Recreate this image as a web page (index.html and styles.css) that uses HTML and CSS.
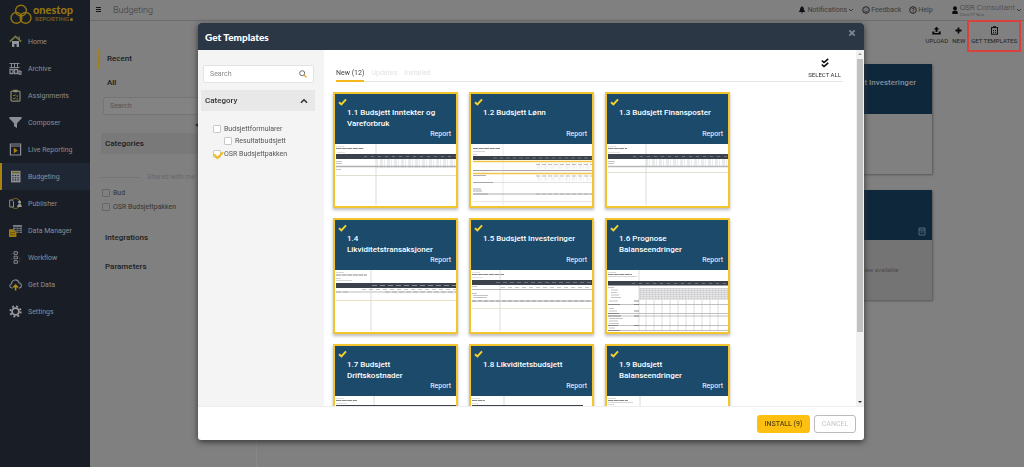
FILE: index.html
```
<!DOCTYPE html>
<html lang="en">
<head>
<meta charset="utf-8">
<title>Budgeting - Get Templates</title>
<link rel="stylesheet" href="styles.css">
</head>
<body>
<svg class="defs" aria-hidden="true">
  <defs>
    <pattern id="cells" width="7" height="2" patternUnits="userSpaceOnUse"><path d="M0 0V2M3 1h3" stroke="#b9bcc0" stroke-width=".6"/></pattern>
    <pattern id="mesh" width="3" height="2" patternUnits="userSpaceOnUse"><rect width="3" height="2" fill="#e9e9ea"/><path d="M0 .5H3M.5 0V2" stroke="#c9cacc" stroke-width=".6"/></pattern>
    <symbol id="tick" viewBox="0 0 9 8"><path d="M1 4.2 3.4 6.4 8 1.4" fill="none" stroke="#f6d32c" stroke-width="2"/></symbol>
    <symbol id="chev" viewBox="0 0 6 4"><path d="M1 1 3 3 5 1" fill="none" stroke="currentColor"/></symbol>
  </defs>
</svg>
<div class="app">
  <aside class="sidebar">
    <a class="logo" href="#" aria-label="onestop reporting">
      <svg class="logo-mark" viewBox="0 0 22 21" fill="none" stroke="#94740e" stroke-width="1.4"><circle cx="11" cy="6.6" r="5.4"/><circle cx="6.4" cy="13.9" r="5.4"/><circle cx="15.6" cy="13.9" r="5.4"/></svg>
      <span class="logo-text"><b>onestop</b><small>REPORTING<i></i></small></span>
    </a>
    <nav class="menu">
      <a href="#"><svg viewBox="0 0 13 13"><path d="M3 6h7v6H7.6V9H5.4v3H3z" fill="#92959a"/><path d="M.8 6.6 6.5 1.4l5.7 5.2" fill="none" stroke="#77793c" stroke-width="1.8"/><path d="M9.5 1.5h1.3v3H9.5z" fill="#777"/></svg>Home</a>
      <a href="#"><svg viewBox="0 0 13 13" fill="none" stroke="#85888d"><path d="M.5 1.5h10M.5 5.5h10M2.5 1v4M5.5 1v4M8.5 1v4"/><path d="M1 7.5h3v4H1zM5.5 7.5h3v4h-3zM10 9l2 .5v2.5H10z" stroke-width="1.3"/></svg>Archive</a>
      <a href="#"><svg viewBox="0 0 13 13" fill="none"><rect x="2" y="2.2" width="9" height="10" rx="1" stroke="#85886f" stroke-width="1.2"/><path d="M4.5.7h4v2.6h-4z" fill="#8b8d6a"/><path d="m4.3 6.2.9.9 1.4-1.6M4.3 9.2l.9.9 1.4-1.6M7.5 7H9M7.5 10H9" stroke="#9b912a"/></svg>Assignments</a>
      <a href="#"><svg viewBox="0 0 13 13"><path d="M.4 1h12.2v1.5L8 7.3V12L5 10.2V7.3L.4 2.5z" fill="#8b8e93"/></svg>Composer</a>
      <a href="#"><svg viewBox="0 0 13 13"><path d="M1.4 1h10.2v11H1.4zM1.4 3h10.2" fill="none" stroke="#8b8e93" stroke-width="1.2"/><path d="m4.8 4.8 4 2.7-4 2.7z" fill="#a9830d"/></svg>Live Reporting</a>
      <a href="#" class="active"><svg viewBox="0 0 13 13"><rect x="2" y=".8" width="9.5" height="11.6" fill="#8a8d91"/><path d="M3 2.6h7.5" stroke="#72672a" stroke-width="1.6"/><path d="M3.2 5.5h7M3.2 7.7h7M3.2 9.9h7" stroke="#242d3a" stroke-width="1.1" stroke-dasharray="1.4 1.2"/></svg>Budgeting</a>
      <a href="#"><svg viewBox="0 0 13 13" fill="none"><circle cx="6.5" cy="6.5" r="5" stroke="#7d6a25"/><path d="M.7 3h2.4l1.4 1.4V10H.7z" fill="#181d26" stroke="#8b8e93"/><circle cx="10.5" cy="5" r="1.5" fill="#9a9da2"/><path d="M8.2 10c0-4 4.6-4 4.6 0z" fill="#9a9da2"/></svg>Publisher</a>
      <a href="#"><svg viewBox="0 0 13 13"><path d="M4 1h9v8H4z" fill="#777a80"/><path d="M4 3.4h9M4 5.6h9M4 7.6h9M7 3v6M10 3v6" stroke="#181d26" stroke-width=".7"/><path d="M0 5.2h5v2h2.4V13H0z" fill="#a17c09"/><path d="M1 8.5h5M1 10.7h5" stroke="#54430f" stroke-width=".6"/></svg>Data Manager</a>
      <a href="#"><svg viewBox="0 0 13 13" fill="none" stroke="#85888d"><path d="M5 .7h3.4v2.6H5zM5 5.2h3.4v2.6H5zM5 9.7h3.4v2.6H5z"/><path d="M3.6 2 2.4 3.4M9.8 6.8l1.6 1M3.5 8.5 2.4 7.3M9.7 11l1.4-1.2" stroke="#713f46"/></svg>Workflow</a>
      <a href="#"><svg viewBox="0 0 13 13" fill="none"><path d="M3.8 10H3C.3 9.8.1 6.3 2.6 5.8 2.6 1 9.4.6 10 5c3.2.3 3 4.8.2 5H9.4" stroke="#85888d" stroke-width="1.1"/><path d="M6.6 12.5V8M4.3 9.4 6.6 7.2l2.3 2.2" stroke="#b38a0b" stroke-width="1.6"/></svg>Get Data</a>
      <a href="#"><svg viewBox="0 0 13 13" fill="none" stroke="#999ca0"><circle cx="6.5" cy="6.5" r="3.4" stroke-width="1.8"/><circle cx="6.5" cy="6.5" r="5.2" stroke-width="1.8" stroke-dasharray="2 2.084"/></svg>Settings</a>
    </nav>
  </aside>

  <div class="page">
    <header class="topbar">
      <button class="burger" aria-label="Menu"><svg viewBox="0 0 6 6"><path d="M0 .5h5M0 2.5h5M0 4.5h5" stroke="#161616"/></svg></button>
      <h1>Budgeting</h1>
      <button class="top-item"><svg class="i8" viewBox="0 0 8 8"><path d="M4 .3c2 .7 1.8 3 2.3 4.2l1 1.5H.7l1-1.5C2.2 3.3 2 1 4 .3zM3 6.5h2L4 7.7z" fill="#111"/></svg>Notifications<svg class="chev" aria-hidden="true"><use href="#chev"/></svg></button>
      <button class="top-item"><svg class="i8" viewBox="0 0 8 8" fill="none" stroke="#222"><circle cx="4" cy="4" r="3.3"/><path d="M2.2 4.6c.6 1.6 3 1.6 3.6 0M2.5 3h.8M4.7 3h.8" stroke-width=".8"/></svg>Feedback</button>
      <button class="top-item"><svg class="i8" viewBox="0 0 8 8" fill="none" stroke="#222"><circle cx="4" cy="4" r="3.3"/><path d="M2.9 3.3c0-1.5 2.3-1.4 2.2 0C5 4 4 4 4 5M4 5.5v.8" stroke-width=".9"/></svg>Help</button>
      <button class="user"><svg class="i8" viewBox="0 0 8 8"><circle cx="4" cy="2.3" r="2" fill="#0c0c0c"/><path d="M1.3 8V6.2c0-2.4 5.4-2.4 5.4 0V8z" fill="#0c0c0c"/></svg><span>OSR Consultant<small>Client 07 New</small></span><svg class="chev" aria-hidden="true"><use href="#chev"/></svg></button>
    </header>

    <div class="content">
      <section class="filters">
        <a class="view current" href="#">Recent</a>
        <a class="view" href="#">All</a>
        <input class="filter-search" type="search" placeholder="Search" aria-label="Search reports">
        <span class="collapse"></span>
        <h2 class="categories">Categories</h2>
        <p class="shared">Shared with me</p>
        <label class="dim-check"><input type="checkbox">Bud</label>
        <label class="dim-check"><input type="checkbox">OSR Budsjettpakken</label>
        <h2 class="group">Integrations</h2>
        <h2 class="group">Parameters</h2>
      </section>
      <main class="reports">
        <div class="toolbar">
          <button><svg viewBox="0 0 9 9"><path d="M4.5.8 7.2 3.6H5.4V6H3.6V3.6H1.8z" fill="#080808"/><path d="M.3 5.5h2V7h4.4V5.5h2v3H.3z" fill="#080808"/></svg>UPLOAD</button>
          <button><svg viewBox="0 0 9 9"><path d="M4.5 1.5v6M1.5 4.5h6" stroke="#080808" stroke-width="1.8"/></svg>NEW</button>
          <button class="marked"><svg viewBox="0 0 9 9" fill="none" stroke="#111"><rect x="1.5" y="1.6" width="6" height="6.6"/><path d="M3 1h3" stroke-width="1.6"/><path d="M3 4.5h1M5 4.5h1M3 6.3h1M5 6.3h1"/></svg>GET TEMPLATES</button>
        </div>
        <div class="report-list">
          <article class="report"><h3>1.5 Budsjett Investeringer</h3><div class="report-body"></div></article>
          <article class="report"><h3><svg viewBox="0 0 8 9" fill="none" stroke="#53687a"><path d="M1 1h6v7H1zM1 3h6M2.5 5h3"/></svg></h3><div class="report-body empty">No preview available</div></article>
        </div>
      </main>
    </div>
  </div>
</div>

<div class="modal" role="dialog" aria-labelledby="modal-title">
  <header class="modal-head">
    <h2 id="modal-title">Get Templates</h2>
    <button aria-label="Close"><svg viewBox="0 0 8 8"><path d="m1.3 1.3 5.4 5.4M6.7 1.3 1.3 6.7" stroke="#7f8894" stroke-width="1.8"/></svg></button>
  </header>
  <div class="modal-main">
    <aside class="picker">
      <div class="search"><input type="search" placeholder="Search" aria-label="Search templates"><svg viewBox="0 0 8 8" fill="none"><circle cx="3.2" cy="3.2" r="2.5" stroke="#59616b" stroke-width=".9"/><path d="m5 5 2.4 2.4" stroke="#e3aa14" stroke-width="1.3"/></svg></div>
      <button class="category">Category<svg viewBox="0 0 8 6"><path d="m1 4.8 3-3 3 3" fill="none" stroke="#333" stroke-width="1.6"/></svg></button>
      <div class="checks">
        <label><input type="checkbox">Budsjettformularer</label>
        <label class="child"><input type="checkbox">Resultatbudsjett</label>
        <label><input type="checkbox" checked>OSR Budsjettpakken</label>
      </div>
    </aside>
    <section class="templates">
      <div class="tabs">
        <button class="tab on">New (12)</button>
        <button class="tab">Updates</button>
        <button class="tab">Installed</button>
        <button class="select-all"><svg viewBox="0 0 8 10" fill="none" stroke="#080808" stroke-width="1.6"><path d="m.8 2.5 2.2 2L7.2.8M.8 6.5 3 8.5l4.2-3.7"/></svg>SELECT ALL</button>
      </div>
      <div class="cards">
        <article class="card"><div class="card-head"><svg class="tick"><use href="#tick"/></svg><h3>1.1 Budsjett Inntekter og Vareforbruk</h3><span>Report</span></div>
          <svg class="thumb" viewBox="0 0 121 62" fill="none"><path d="M1 2.5h8M2 8.5h8" stroke="#ccc" stroke-width=".6"/><path d="M1 4.5h28" stroke="#888" stroke-dasharray="5 .6"/><path d="M41 0v61" stroke="#ccc" stroke-width=".7"/><path fill="#3b424c" d="M1 10h120v5H1z"/><path d="M29 12.5h92" stroke="#79808a" stroke-width=".8" stroke-dasharray="3 4"/><path fill="url(#cells)" d="M41 15h80v9H41z"/><path d="M1 17.5h6M1 19.5h6M1 25.5h5" stroke="#aaa" stroke-width=".7"/><path d="M1 22.5h120" stroke="#aeb0b3" stroke-width="1.6"/><path d="M1 31.5h120" stroke="#d8d6c4" stroke-width=".8"/></svg></article>
        <article class="card"><div class="card-head"><svg class="tick"><use href="#tick"/></svg><h3>1.2 Budsjett Lønn</h3><span>Report</span></div>
          <svg class="thumb" viewBox="0 0 121 62" fill="none"><path d="M2 7.5h12M2 10.5h4" stroke="#bbb" stroke-width=".6"/><path d="M2 4.5h27" stroke="#888" stroke-dasharray="5 .6"/><path d="M32 0v61" stroke="#ddd" stroke-width=".6"/><path fill="url(#cells)" d="M65 19h56v6H65zM65 31h56v6H65z" opacity=".5"/><path fill="#3b424c" d="M2 12h119v4H2z"/><path d="M22 14h99" stroke="#79808a" stroke-width=".8" stroke-dasharray="4 2.5"/><path d="M2 17.5h119M2 29.5h119" stroke="#f0c445" stroke-width="1.6"/><path d="M2 26.5h119M2 50h119" stroke="#a9abad"/><path d="M65 20.5h56M65 32h56M65 50h56" stroke="#999" stroke-width=".6" stroke-dasharray="4 2"/><path d="M2 38.5h119" stroke="#ccc" stroke-width=".6"/><path d="M2 38.5h20M2 26.5h18M2 50h15M2 45h8M2 47h9M2 31.5h13" stroke="#999" stroke-width=".8"/><path d="M2 57.5h119" stroke="#e6e3d6" stroke-width=".8"/></svg></article>
        <article class="card"><div class="card-head"><svg class="tick"><use href="#tick"/></svg><h3>1.3 Budsjett Finansposter</h3><span>Report</span></div>
          <svg class="thumb" viewBox="0 0 121 62" fill="none"><path d="M1 2.5h8M1 8.5h12" stroke="#ccc" stroke-width=".6"/><path d="M1 4.5h19" stroke="#888" stroke-dasharray="5 .6"/><path d="M39 0v61" stroke="#ccc" stroke-width=".7"/><path fill="#3b424c" d="M1 10h120v5H1z"/><path d="M26 12.5h95" stroke="#79808a" stroke-width=".8" stroke-dasharray="3 4"/><path fill="url(#cells)" d="M39 15h82v8H39z"/><path d="M1 17.5h7M1 19.5h6" stroke="#aaa" stroke-width=".7"/><path d="M1 22.5h120" stroke="#b5b7b9" stroke-width="1.6"/><path d="M1 28.5h120" stroke="#d8d6c4" stroke-width=".8"/></svg></article>
        <article class="card"><div class="card-head"><svg class="tick"><use href="#tick"/></svg><h3>1.4 Likviditetstransaksjoner</h3><span>Report</span></div>
          <svg class="thumb" viewBox="0 0 121 62" fill="none"><path d="M1 2.5h8M1 8.5h5M1 10.5h16" stroke="#bbb" stroke-width=".6"/><path d="M1 5h31" stroke="#888" stroke-dasharray="5 .6"/><path d="M36 0v61" stroke="#ccc" stroke-width=".7"/><path fill="#3b424c" d="M1 13h120v5H1z"/><path d="M37 15.5h84" stroke="#868c94" stroke-dasharray="5 3"/><path d="M27 19.5h94" stroke="#b2b4b6" stroke-width=".8" stroke-dasharray="4 3"/><path d="M1 22h120" stroke="#dcdddd" stroke-width="2"/><path d="M1 22h12M50 22h71" stroke="#999" stroke-width=".7" stroke-dasharray="5 2"/><path d="M1 30.5h120" stroke="#ded8b0" stroke-width=".8"/></svg></article>
        <article class="card"><div class="card-head"><svg class="tick"><use href="#tick"/></svg><h3>1.5 Budsjett Investeringer</h3><span>Report</span></div>
          <svg class="thumb" viewBox="0 0 121 62" fill="none"><path d="M1 2.5h8M1 7.5h11" stroke="#ccc" stroke-width=".6"/><path d="M1 4.5h32" stroke="#888" stroke-dasharray="5 .6"/><path d="M29 0v61" stroke="#ccc" stroke-width=".7"/><path fill="#3b424c" d="M1 10h120v5H1z"/><path d="M25 12.5h96" stroke="#79808a" stroke-width=".8" stroke-dasharray="4 3"/><path d="M30 17.5h91" stroke="#bbb" stroke-width=".8" stroke-dasharray="4 3"/><path d="M1 19.5h120" stroke="#a3a5a7" stroke-width=".8"/><path d="M1 16.5h5M1 23.5h5M2 25.5h15M2 27.5h14" stroke="#aaa" stroke-width=".7"/><path d="M1 31h120" stroke="#d0d1d2" stroke-width="2"/><path d="M1 31h120" stroke="#999" stroke-width=".8" stroke-dasharray="4 2"/><path d="M1 38.5h120" stroke="#e3dfc4" stroke-width=".8"/></svg></article>
        <article class="card"><div class="card-head"><svg class="tick"><use href="#tick"/></svg><h3>1.6 Prognose Balanseendringer</h3><span>Report</span></div>
          <svg class="thumb" viewBox="0 0 121 62" fill="none"><path d="M1 2.5h8M1 6.5h29" stroke="#bbb" stroke-width=".6"/><path d="M1 4.5h24" stroke="#888" stroke-dasharray="5 .6"/><path fill="url(#mesh)" d="M32 18h89v12H32z"/><path d="M32 0v61M39 30v31M47 30v31M55 30v31M63 30v31M71 30v31M79 30v31M87 30v31M95 30v31M103 30v31M111 30v31" stroke="#c5c6c8" stroke-width=".6"/><path fill="#3b424c" d="M1 11h120v4.5H1z"/><path d="M25 13.5h96" stroke="#79808a" stroke-width=".8" stroke-dasharray="3 4"/><path d="M1 17.5h6M4 20h7M4 22.5h6M4 25h8M4 27.5h10M2 31h9M2 38.5h5M2 41h8M2 48.5h14M2 51h9M2 53.5h10M2 58h6" stroke="#aaa" stroke-width=".7"/><path d="M1 34.5h120M1 43.5h120M1 46h120M1 55.5h120M1 60.5h120" stroke="#aeb0b2" stroke-width=".8"/><path d="M1 34.5h12M1 43.5h11M1 46h13M1 55.5h10M1 60.5h12M27 34.5h5M27 31h5M27 41h5M27 46h5M27 55.5h5" stroke="#777" stroke-width=".8"/></svg></article>
        <article class="card"><div class="card-head"><svg class="tick"><use href="#tick"/></svg><h3>1.7 Budsjett Driftskostnader</h3><span>Report</span></div>
          <svg class="thumb" viewBox="0 0 121 62" fill="none"><path d="M1 2.5h8M1 7.5h11" stroke="#ccc" stroke-width=".6"/><path d="M1 4.5h21" stroke="#888" stroke-dasharray="5 .6"/><path d="M39 0v61" stroke="#ccc" stroke-width=".7"/><path fill="#3b424c" d="M1 9h120v5H1z"/></svg></article>
        <article class="card"><div class="card-head"><svg class="tick"><use href="#tick"/></svg><h3>1.8 Likviditetsbudsjett</h3><span>Report</span></div>
          <svg class="thumb" viewBox="0 0 121 62" fill="none"><path d="M1 2.5h8M1 7.5h6" stroke="#ccc" stroke-width=".6"/><path d="M1 4.5h13" stroke="#888" stroke-dasharray="5 .6"/><path d="M33 0v61" stroke="#ccc" stroke-width=".7"/><path fill="#3b424c" d="M1 9h111v5H1z"/></svg></article>
        <article class="card"><div class="card-head"><svg class="tick"><use href="#tick"/></svg><h3>1.9 Budsjett Balanseendringer</h3><span>Report</span></div>
          <svg class="thumb" viewBox="0 0 121 62" fill="none"><path d="M1 2.5h8M1 6.5h25M1 8.5h6" stroke="#bbb" stroke-width=".6"/><path d="M1 4.5h20" stroke="#888" stroke-dasharray="5 .6"/><path d="M33 0v61" stroke="#ccc" stroke-width=".7"/><path fill="#3b424c" d="M1 12h120v5H1z"/></svg></article>
      </div>
    </section>
    <div class="scrollbar"><i class="up"></i><i class="thumb-bar"></i><i class="down"></i></div>
  </div>
  <footer class="modal-foot">
    <button class="install">INSTALL (9)</button>
    <button class="cancel">CANCEL</button>
  </footer>
</div>
</body>
</html>
```
FILE: styles.css
```
* { box-sizing: border-box; }
body { margin: 0; background: #808080; font: 7px/10px Roboto, "Liberation Sans", sans-serif; color: #222; overflow: hidden; }
h1, h2, h3, p { margin: 0; font-weight: 500; }
a { color: inherit; text-decoration: none; }
button { font: inherit; color: inherit; background: none; border: 0; padding: 0; }
input { font: inherit; margin: 0; }
svg { display: block; flex: none; }
.defs { position: absolute; width: 0; height: 0; }

.app { display: flex; min-height: 100vh; }

/* Sidebar */
.sidebar { flex: 0 0 90px; background: #181d26; }
.logo { display: flex; align-items: center; gap: 1px; height: 28px; padding: 0 0 0 10px; color: #94740e; }
.logo-mark { width: 22px; height: 21px; }
.logo-text { display: flex; flex-direction: column; }
.logo-text b { font: 900 11px/10px Lato, sans-serif; }
.logo-text small { display: flex; align-items: center; gap: 1px; padding-left: 2px; font: 900 6px/8px Lato, sans-serif; color: #6f5a1b; }
.logo-text i { width: 3px; height: 3px; border-radius: 50%; background: #94740e; }
.menu a { display: flex; align-items: center; gap: 6px; height: 27px; padding-left: 9px; color: #8c8f94; }
.menu svg { width: 13px; height: 13px; }
.menu .active { padding-left: 7px; border-left: 2px solid #a9830d; background: #202734; }

/* Top bar */
.page { flex: 1; display: flex; flex-direction: column; min-width: 0; }
.topbar { display: flex; align-items: center; height: 21px; padding: 0 2px 0 6px; border-bottom: 1px solid #6d6d6d; color: #3c3c3c; }
.burger svg { width: 6px; height: 6px; }
.topbar h1 { flex: 1; margin-left: 11px; font-size: 9px; font-weight: 300; }
.top-item { display: flex; align-items: center; gap: 1px; margin-right: 8px; }
.user { display: flex; align-items: center; gap: 1px; margin-left: 10px; font-size: 8px; line-height: 8px; font-weight: 300; text-align: left; }
.user small { display: block; font-size: 4px; line-height: 5px; }
.i8 { width: 8px; height: 8px; }
.chev { width: 6px; height: 4px; }

/* Filter column */
.content { flex: 1; display: flex; }
.filters { flex: 0 0 166px; padding: 28px 0 0 8px; border-right: 1px solid #878787; color: #1c1c1c; }
.view { display: flex; align-items: center; height: 20px; margin-bottom: 4px; padding-left: 7px; border-left: 2px solid transparent; font-size: 8px; font-weight: 500; }
.view.current { border-color: #a17f1c; }
.filter-search { display: block; width: 153px; height: 18px; margin: 3px 0 18px 5px; padding: 0 6px; border: 1px solid #757575; border-radius: 2px; background: #838383; }
.filter-search::placeholder { color: #555; opacity: 1; }
.collapse { position: absolute; left: 195px; top: 123px; border: solid transparent; border-width: 2px 3px 2px 0; border-right-color: #222; }
.categories { margin-left: 3px; padding: 0 4px; font-size: 8px; line-height: 21px; background: #797979; }
.shared { display: flex; align-items: center; gap: 7px; margin: 17px 0 3px 3px; line-height: 12px; font-weight: 400; color: #686868; }
.shared::before { content: ""; width: 39px; border-top: 1px solid #747474; }
.shared::after { content: ""; flex: 1; border-top: 1px solid #747474; }
.dim-check { display: flex; align-items: center; gap: 3px; height: 14px; margin-left: 4px; color: #343434; }
.dim-check input { appearance: none; width: 8px; height: 8px; border: 1px solid #666; border-radius: 1px; }
.group { margin: 0 0 9px 7px; font-size: 8px; line-height: 20px; }
.dim-check + .group { margin-top: 14px; }

/* Reports */
.reports { flex: 1; }
.toolbar { display: flex; justify-content: flex-end; align-items: flex-start; height: 43px; padding-right: 3px; color: #1e1e1e; }
.toolbar button { display: flex; flex-direction: column; align-items: center; gap: 2px; padding: 5px 2px 0; font-size: 6px; line-height: 8px; }
.toolbar svg { width: 9px; height: 9px; }
.toolbar .marked { height: 32px; padding: 4px 2px 0; margin-top: -1px; border: 2px solid #d9413d; }
.report-list { display: flex; flex-direction: column; align-items: flex-end; gap: 16px; padding-right: 92px; }
.report { width: 122px; box-shadow: 1px 1px 2px #555; }
.report h3 { display: flex; height: 50px; padding: 13px 6px 0 14px; background: #0f273b; color: #868f98; font-size: 8px; line-height: 11px; }
.report h3 svg { width: 8px; height: 9px; margin: 24px 0 0 auto; }
.report-body { height: 60px; }
.report-body.empty { display: grid; place-items: center; background: #747474; color: #4c4c4c; font-size: 6px; }

/* Modal */
.modal { position: fixed; inset: 23px 160px 27px 198px; display: flex; flex-direction: column; border-radius: 3px; overflow: hidden; background: #fff; box-shadow: 0 2px 6px #333; }
.modal-head { display: flex; align-items: center; justify-content: space-between; height: 27px; padding: 0 8px 0 7px; background: #2c3746; color: #fff; }
.modal-head h2 { font: 900 10px/12px Lato, sans-serif; }
.modal-head button { align-self: flex-start; margin-top: 6px; }
.modal-head svg { width: 8px; height: 8px; }
.modal-main { flex: 1; display: flex; min-height: 0; }
.picker { flex: 0 0 125px; padding: 15px 9px 0 3px; background: #f4f4f4; }
.search { display: flex; align-items: center; height: 18px; margin: 0 1px 7px 2px; padding: 0 6px; border: 1px solid #e3e3e3; border-radius: 2px; background: #fff; }
.search input { flex: 1; min-width: 0; padding: 0; border: 0; background: none; outline: 0; }
.search input::placeholder { color: #888; opacity: 1; }
.search svg { width: 8px; height: 8px; }
.category { display: flex; align-items: center; justify-content: space-between; width: 100%; height: 21px; padding: 0 7px 0 4px; background: #e8e8e8; color: #333; font-size: 8px; font-weight: 500; }
.category svg { width: 8px; height: 6px; }
.checks { padding: 11px 0 0 12px; color: #555; }
.checks label { display: flex; align-items: center; gap: 3px; height: 13px; }
.checks .child { height: 12px; padding-left: 11px; }
.checks input { appearance: none; position: relative; width: 8px; height: 8px; border: 1px solid #c9c9c9; border-radius: 1px; background: #fff; }
.checks input:checked::after { content: ""; position: absolute; left: 0; top: 0; width: 7px; height: 4px; border: solid #edbd1c; border-width: 0 0 2px 2px; transform: rotate(-45deg); }
.templates { flex: 1; min-width: 0; padding: 7px 13px 0 8px; overflow: hidden; }
.tabs { display: flex; align-items: flex-end; gap: 7px; height: 25px; margin: 0 0 10px 4px; border-bottom: 1px solid #e6e6e6; }
.tab { height: 15px; line-height: 12px; padding-bottom: 3px; border-bottom: 2px solid transparent; color: #e3e3e3; margin-bottom: -1px; }
.tab.on { border-color: #f4b81c; color: #444; }
.select-all { display: flex; flex-direction: column; align-items: center; align-self: flex-start; gap: 3px; margin: 1px 2px 0 auto; font-size: 6px; line-height: 8px; color: #333; }
.select-all svg { width: 8px; height: 10px; }
.cards { display: grid; grid-template-columns: repeat(auto-fill, 125px); gap: 10px 11px; padding-left: 1px; }
.card { border: 2px solid #f2c52e; background: #fff; box-shadow: 0 2px 3px #bbb; }
.card-head { display: flex; flex-direction: column; position: relative; height: 50px; padding: 13px 5px 4px 12px; background: #1b4a6b; color: #fff; }
.tick { position: absolute; left: 3px; top: 4px; width: 9px; height: 8px; }
.card h3 { flex: 1; padding-right: 9px; font-size: 8px; line-height: 11px; }
.card-head span { align-self: flex-end; line-height: 11px; }
.thumb { width: 100%; height: auto; }
.scrollbar { flex: 0 0 8px; display: flex; flex-direction: column; align-items: center; padding: 3px 0; background: #f1f1f1; }
.scrollbar .up, .scrollbar .down { border: 2px solid transparent; }
.scrollbar .up { border-bottom-color: #999; border-top: 0; }
.scrollbar .down { margin-top: auto; border-top-color: #333; border-bottom: 0; }
.thumb-bar { width: 6px; height: 78%; margin-top: 4px; background: #c1c1c1; }
.modal-foot { display: flex; justify-content: flex-end; align-items: center; gap: 4px; height: 34px; padding-right: 8px; border-top: 1px solid #eee; }
.modal-foot button { height: 18px; border-radius: 3px; font-weight: 500; }
.install { width: 53px; background: #fdc010; color: #5c4a10; }
.modal-foot .cancel { width: 42px; border: 1px solid #bbb; color: #c4c4c4; font-weight: 400; }
```
